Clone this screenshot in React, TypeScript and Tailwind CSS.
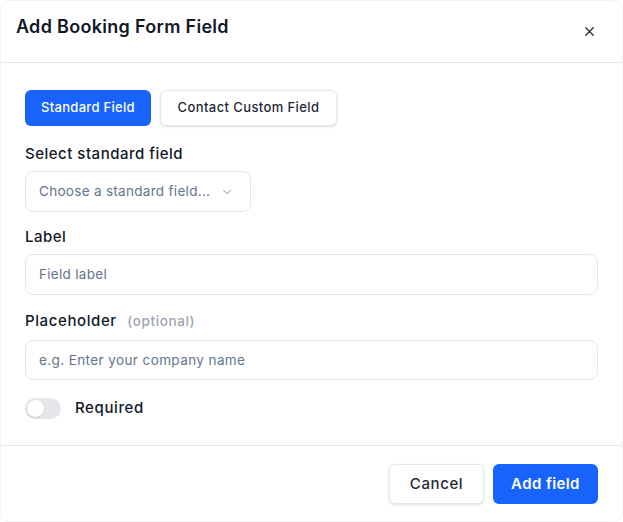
import { X, ChevronDown } from "lucide-react"

export default function App() {
  return (
    <div className="h-[522px] w-[623px] bg-white font-['Inter',sans-serif] text-[#111827]">
      <div className="flex h-full flex-col rounded-lg border border-gray-100 bg-white">
        <div className="flex h-[62px] items-center justify-between border-b border-gray-200 pl-[15px] pr-[25px]">
          <h2 className="-mt-[10px] text-[18px] font-semibold tracking-[0.3px] text-[#111827]">
            Add Booking Form Field
          </h2>
          <X className="h-[15px] w-[15px] text-[#1f2937]" strokeWidth={2} />
        </div>

        <div className="flex-1 px-[24px] pt-[27px]">
          <div className="flex gap-[9px]">
            <button className="h-[36px] w-[126px] rounded-md bg-[#1863fc] text-[13px] font-medium tracking-[0.3px] text-white">
              Standard Field
            </button>
            <button className="h-[36px] w-[177px] rounded-md border border-gray-200 bg-white text-[13px] font-medium tracking-[0.4px] text-[#1f2937] shadow-sm">
              Contact Custom Field
            </button>
          </div>

          <label className="mt-[17px] block text-[15px] font-medium leading-[22px] tracking-[0.5px]">Select standard field</label>
          <div className="mt-[6px] flex h-[41px] w-[226px] items-center justify-between rounded-lg border border-gray-200 pl-[13px] pr-[16px]">
            <span className="text-[13.5px] tracking-[0.3px] text-[#64748b]">Choose a standard field...</span>
            <ChevronDown className="h-[14px] w-[14px] text-[#94a3b8]" strokeWidth={1.75} />
          </div>

          <label className="mt-[14px] block text-[15px] font-medium leading-[22px] tracking-[0.5px]">Label</label>
          <div className="mt-[6px] flex h-[41px] items-center rounded-lg border border-gray-200 px-[13px]">
            <span className="text-[13.5px] tracking-[0.3px] text-[#64748b]">Field label</span>
          </div>

          <label className="mt-[15px] block text-[15px] font-medium leading-[22px] tracking-[0.6px]">
            Placeholder <span className="ml-[6px] text-[13.5px] tracking-[0.6px] text-[#9ca3af]">(optional)</span>
          </label>
          <div className="mt-[8px] flex h-[40px] items-center rounded-lg border border-gray-200 px-[13px]">
            <span className="text-[13.5px] tracking-[0.4px] text-[#64748b]">e.g. Enter your company name</span>
          </div>

          <div className="mt-[17px] flex items-center gap-[14px]">
            <div className="flex h-[21px] w-[36px] items-center rounded-full bg-gray-200 p-[2px]">
              <div className="h-[17px] w-[17px] rounded-full bg-white shadow-sm" />
            </div>
            <span className="text-[15px] font-medium tracking-[0.6px]">Required</span>
          </div>
        </div>

        <div className="flex h-[76px] items-start justify-end gap-[9px] border-t border-gray-200 px-[24px] pt-[18px]">
          <button className="h-[40px] w-[95px] rounded-md border border-gray-200 bg-white text-[15px] font-medium tracking-[0.6px] text-[#1f2937] shadow-sm">
            Cancel
          </button>
          <button className="h-[40px] w-[105px] rounded-md bg-[#1863fc] text-[15px] font-semibold tracking-[0.4px] text-white">
            Add field
          </button>
        </div>
      </div>
    </div>
  )
}
